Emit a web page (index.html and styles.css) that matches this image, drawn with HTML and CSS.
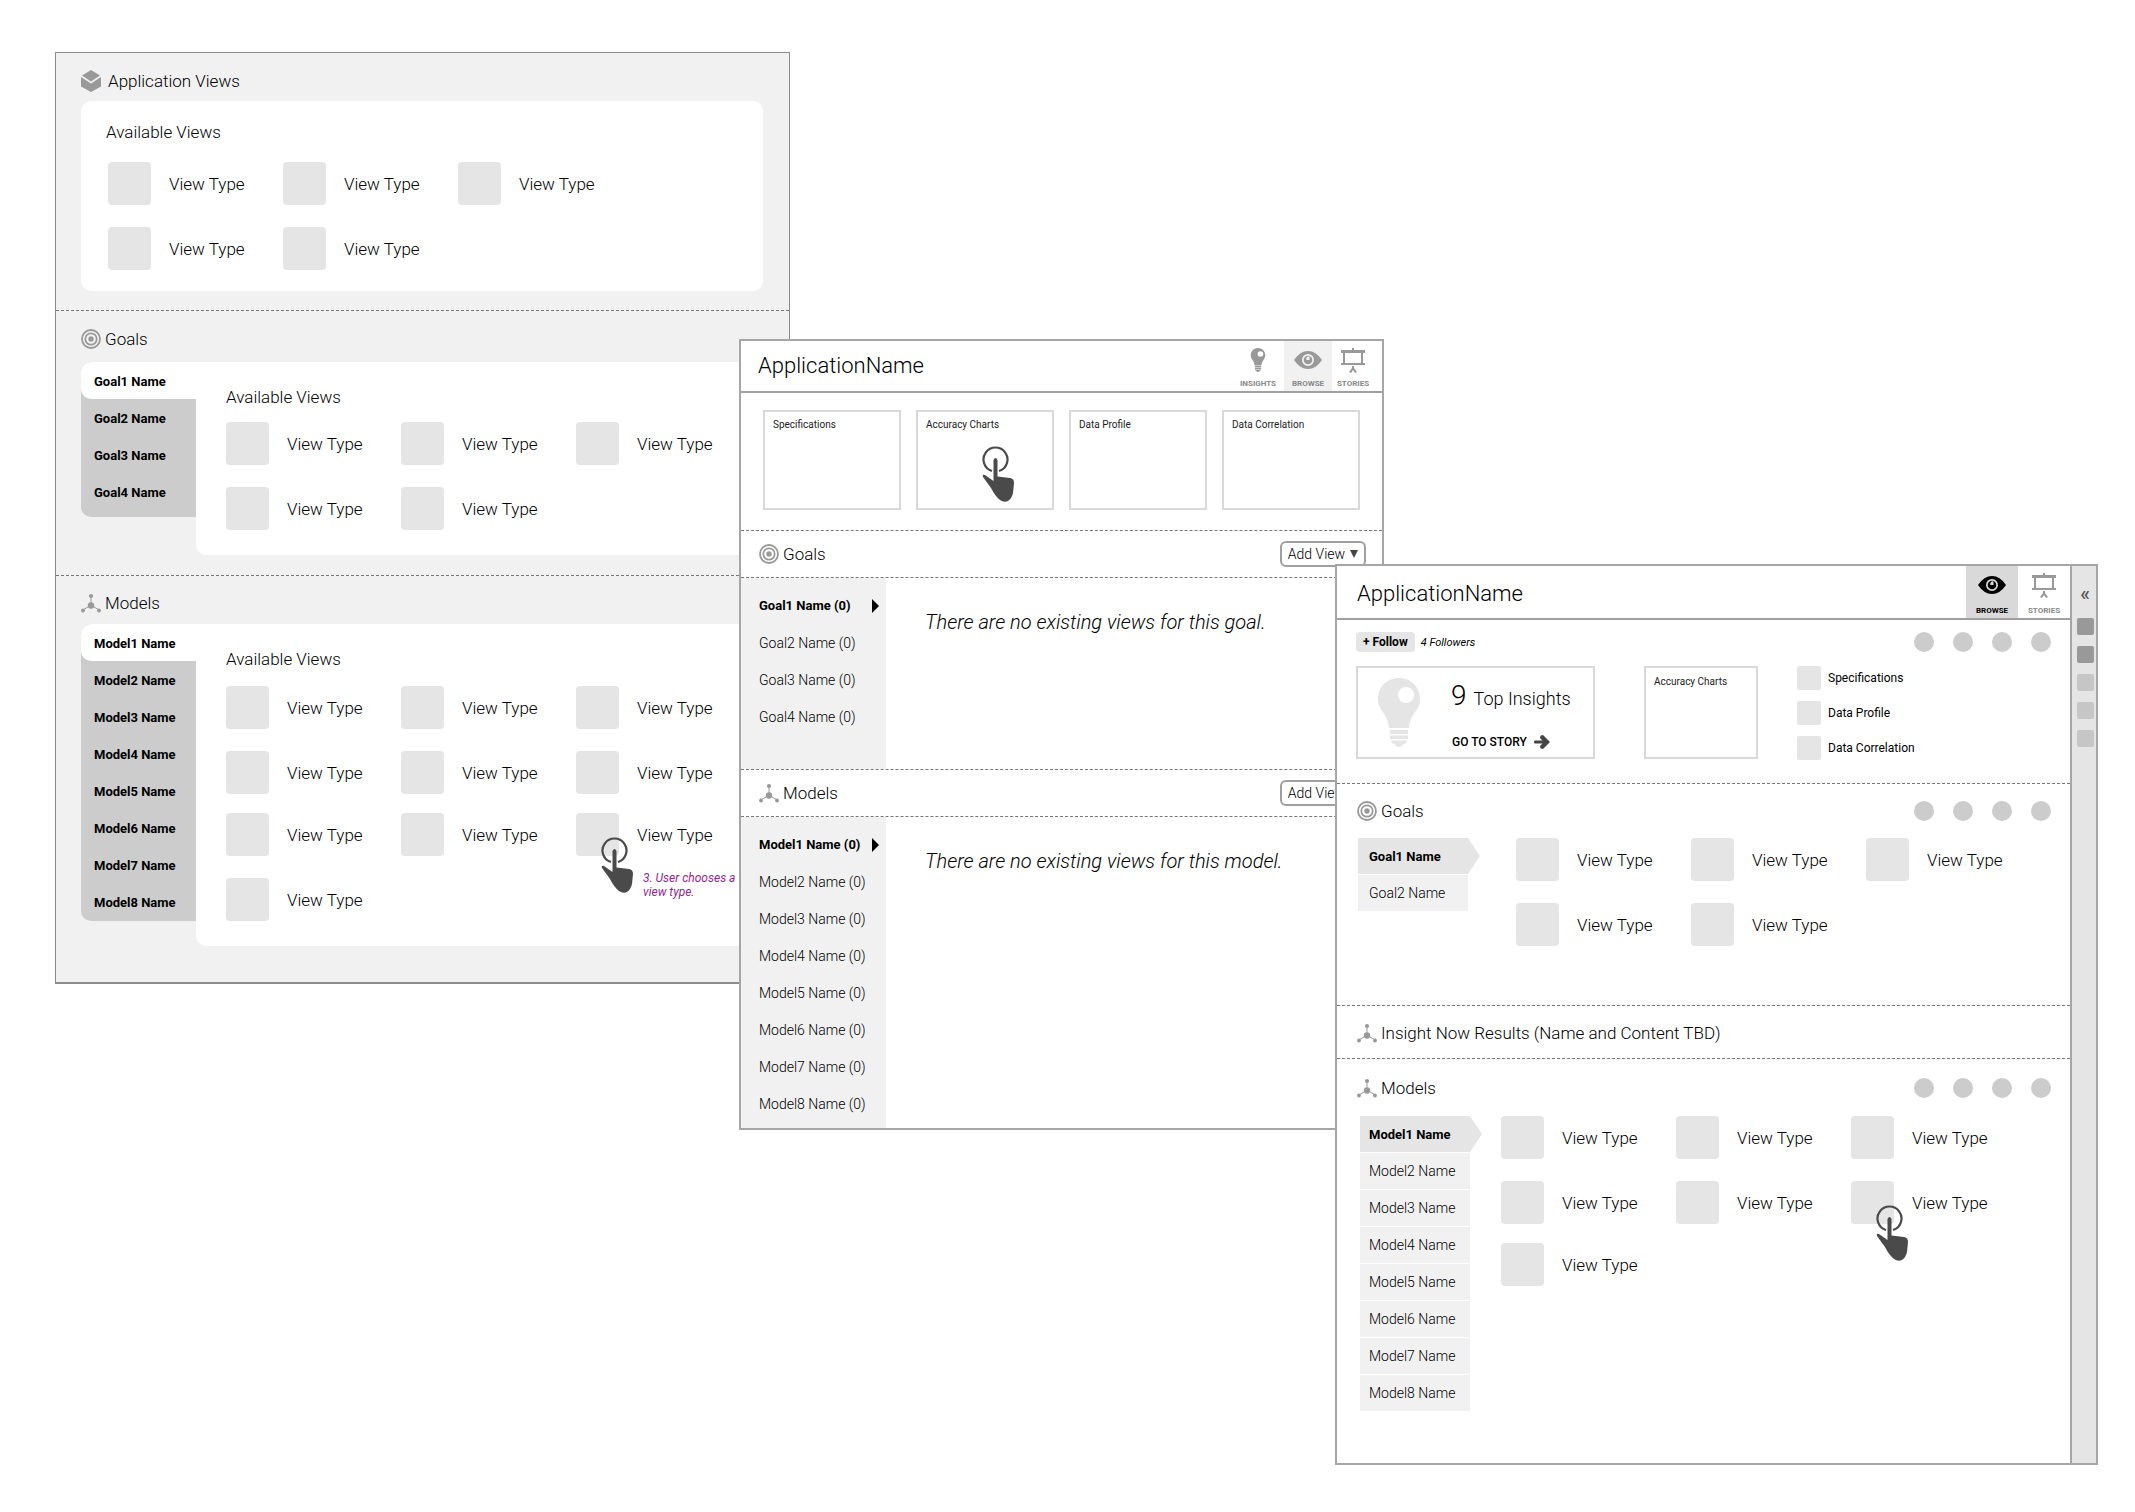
FILE: index.html
```html
<!DOCTYPE html>
<html lang="en">
<head>
<meta charset="utf-8">
<title>Application browse flow</title>
<link rel="stylesheet" href="styles.css">
</head>
<body>
<svg class="defs" aria-hidden="true">
  <symbol id="cube" viewBox="0 0 20 22">
    <path d="M10 0 19 5.500 10 11.500 1 5.500z"/>
    <path d="M0 7 10 13.500 20 7V16.500L10 22 0 16.500z"/>
  </symbol>
  <symbol id="target" viewBox="0 0 20 20">
    <circle cx="10" cy="10" r="9" fill="none" stroke="currentColor" stroke-width="1.800"/>
    <circle cx="10" cy="10" r="5.700" fill="none" stroke="currentColor" stroke-width="1.700"/>
    <circle cx="10" cy="10" r="2.700"/>
  </symbol>
  <symbol id="nodes" viewBox="0 0 20 20">
    <path d="M10 3V12L2 17M10 12 18 17" fill="none" stroke="currentColor" stroke-width="1"/>
    <circle cx="10" cy="3" r="2.100"/><circle cx="10" cy="12.500" r="3.200"/>
    <circle cx="2" cy="17.500" r="1.900"/><circle cx="18" cy="17.500" r="1.900"/>
  </symbol>
  <symbol id="bulb" viewBox="0 0 42 69">
    <path fill-rule="evenodd" d="M21 0C33 0 42 9 42 21C42 33 32 35 31 50H11C10 35 0 33 0 21C0 9 9 0 21 0zM28 9A8 8 0 1 0 28 25A8 8 0 1 0 28 9z"/>
    <path d="M12 52H30V56H12zM12 57.500H30V61H12zM13 62.500H29C29 65 27 66 25 66C25 68 23 69 21 69C19 69 17 68 17 66C15 66 13 65 13 62.500z"/>
  </symbol>
  <symbol id="eye" viewBox="0 0 28 18">
    <path fill-rule="evenodd" d="M0 9Q6 0 14 0Q22 0 28 9Q22 18 14 18Q6 18 0 9zM14 3A6 6 0 1 0 14 15A6 6 0 1 0 14 3z"/>
    <path fill-rule="evenodd" d="M14 4.700A4.300 4.300 0 1 0 14 13.300A4.300 4.300 0 1 0 14 4.700zM15.500 5.500V9H12.500A2.500 2.500 0 0 1 15.500 5.500z"/>
  </symbol>
  <symbol id="easel" viewBox="0 0 24 25">
    <path fill-rule="evenodd" d="M0 2H24V5H22V15H24V17H0V15H2V5H0zM4 5V15H20V5z"/>
    <path d="M11 0H13V2H11zM11 18H13V20L16 24L14 25L12 22L10 25L8 24L11 20z"/>
  </symbol>
  <symbol id="tap" viewBox="0 0 32 56">
    <path d="M10 25A12 12 0 1 1 17 25" fill="none" stroke="currentColor" stroke-width="2.200"/>
    <path d="M11.500 14Q13.500 10 15.500 14V30.500L28 32Q32 32.500 32 37L31 47Q30 52 26 55Q22 57 18 54Q13 50 9 42L1 31Q0 28 3 29L11.500 35z"/>
  </symbol>
  <symbol id="arrow" viewBox="0 0 16 14">
    <path d="M1 5.500H8.500L6 3Q6 0 9 0L16 7 9 14Q6 14 6 11L8.500 8.500H1Q0 8.500 0 7Q0 5.500 1 5.500z"/>
  </symbol>
</svg>

<main class="board">

  <section class="window window-views">
    <div class="group">
      <h2 class="heading heading-wide"><svg class="icon icon-cube"><use href="#cube"/></svg>Application Views</h2>
      <div class="panel">
        <h3 class="subhead">Available Views</h3>
        <ul class="tiles">
          <li>View Type</li><li>View Type</li><li>View Type</li>
          <li>View Type</li><li>View Type</li>
        </ul>
      </div>
    </div>
    <div class="group group-goals">
      <h2 class="heading"><svg class="icon"><use href="#target"/></svg>Goals</h2>
      <div class="split">
        <nav class="tabs">
          <a class="on" href="#">Goal1 Name</a><a href="#">Goal2 Name</a><a href="#">Goal3 Name</a><a href="#">Goal4 Name</a>
        </nav>
        <div class="panel panel-side">
          <h3 class="subhead">Available Views</h3>
          <ul class="tiles">
            <li>View Type</li><li>View Type</li><li>View Type</li>
            <li>View Type</li><li>View Type</li>
          </ul>
        </div>
      </div>
    </div>
    <div class="group group-models">
      <h2 class="heading"><svg class="icon"><use href="#nodes"/></svg>Models</h2>
      <div class="split">
        <nav class="tabs">
          <a class="on" href="#">Model1 Name</a><a href="#">Model2 Name</a><a href="#">Model3 Name</a><a href="#">Model4 Name</a><a href="#">Model5 Name</a><a href="#">Model6 Name</a><a href="#">Model7 Name</a><a href="#">Model8 Name</a>
        </nav>
        <div class="panel panel-side">
          <h3 class="subhead">Available Views</h3>
          <ul class="tiles">
            <li>View Type</li><li>View Type</li><li>View Type</li>
            <li>View Type</li><li>View Type</li><li>View Type</li>
            <li>View Type</li><li>View Type</li>
            <li>View Type<svg class="tap tap-tile"><use href="#tap"/></svg><span class="note">3. User chooses a view type.</span></li>
            <li>View Type</li>
          </ul>
        </div>
      </div>
    </div>
  </section>

  <section class="window window-empty">
    <header class="bar">
      <h1 class="title">ApplicationName</h1>
      <nav class="modes">
        <a href="#"><svg class="mode-bulb"><use href="#bulb"/></svg>INSIGHTS</a>
        <a class="on" href="#"><svg class="mode-eye"><use href="#eye"/></svg>BROWSE</a>
        <a href="#"><svg class="mode-easel"><use href="#easel"/></svg>STORIES</a>
      </nav>
    </header>
    <div class="boxes">
      <a class="box" href="#">Specifications</a>
      <a class="box" href="#">Accuracy Charts<svg class="tap tap-box"><use href="#tap"/></svg></a>
      <a class="box" href="#">Data Profile</a>
      <a class="box" href="#">Data Correlation</a>
    </div>
    <div class="strip">
      <h2 class="heading"><svg class="icon"><use href="#target"/></svg>Goals</h2>
      <button class="add" type="button">Add View <span class="caret"></span></button>
    </div>
    <div class="listing listing-goals">
      <nav class="side">
        <a class="on" href="#">Goal1 Name (0)</a><a href="#">Goal2 Name (0)</a><a href="#">Goal3 Name (0)</a><a href="#">Goal4 Name (0)</a>
      </nav>
      <p class="empty">There are no existing views for this goal.</p>
    </div>
    <div class="strip">
      <h2 class="heading"><svg class="icon"><use href="#nodes"/></svg>Models</h2>
      <button class="add" type="button">Add View <span class="caret"></span></button>
    </div>
    <div class="listing">
      <nav class="side">
        <a class="on" href="#">Model1 Name (0)</a><a href="#">Model2 Name (0)</a><a href="#">Model3 Name (0)</a><a href="#">Model4 Name (0)</a><a href="#">Model5 Name (0)</a><a href="#">Model6 Name (0)</a><a href="#">Model7 Name (0)</a><a href="#">Model8 Name (0)</a>
      </nav>
      <p class="empty">There are no existing views for this model.</p>
    </div>
  </section>

  <section class="window window-browse">
    <div class="content">
      <header class="bar">
        <h1 class="title">ApplicationName</h1>
        <nav class="modes">
          <a class="on" href="#"><svg class="mode-eye"><use href="#eye"/></svg>BROWSE</a>
          <a href="#"><svg class="mode-easel"><use href="#easel"/></svg>STORIES</a>
        </nav>
      </header>
      <div class="overview">
        <div class="row">
          <button class="follow" type="button">+ Follow</button>
          <span class="followers">4 Followers</span>
          <span class="dots"><i></i><i></i><i></i><i></i></span>
        </div>
        <div class="cards">
          <div class="insight">
            <svg class="big-bulb"><use href="#bulb"/></svg>
            <div>
              <p class="count"><b>9</b> Top Insights</p>
              <a class="story" href="#">GO TO STORY<svg class="arrow"><use href="#arrow"/></svg></a>
            </div>
          </div>
          <a class="box" href="#">Accuracy Charts</a>
          <ul class="links">
            <li>Specifications</li><li>Data Profile</li><li>Data Correlation</li>
          </ul>
        </div>
      </div>
      <div class="part part-goals">
        <div class="row">
          <h2 class="heading"><svg class="icon"><use href="#target"/></svg>Goals</h2>
          <span class="dots"><i></i><i></i><i></i><i></i></span>
        </div>
        <div class="picker">
          <nav class="flags">
            <a class="on" href="#">Goal1 Name</a><a href="#">Goal2 Name</a>
          </nav>
          <ul class="tiles">
            <li>View Type</li><li>View Type</li><li>View Type</li>
            <li>View Type</li><li>View Type</li>
          </ul>
        </div>
      </div>
      <div class="part part-results">
        <h2 class="heading"><svg class="icon"><use href="#nodes"/></svg>Insight Now Results (Name and Content TBD)</h2>
      </div>
      <div class="part part-models">
        <div class="row">
          <h2 class="heading"><svg class="icon"><use href="#nodes"/></svg>Models</h2>
          <span class="dots"><i></i><i></i><i></i><i></i></span>
        </div>
        <div class="picker">
          <nav class="flags">
            <a class="on" href="#">Model1 Name</a><a href="#">Model2 Name</a><a href="#">Model3 Name</a><a href="#">Model4 Name</a><a href="#">Model5 Name</a><a href="#">Model6 Name</a><a href="#">Model7 Name</a><a href="#">Model8 Name</a>
          </nav>
          <ul class="tiles">
            <li>View Type</li><li>View Type</li><li>View Type</li>
            <li>View Type</li><li>View Type</li>
            <li>View Type<svg class="tap tap-tile"><use href="#tap"/></svg></li>
            <li>View Type</li>
          </ul>
        </div>
      </div>
    </div>
    <aside class="rail">
      <button class="collapse" type="button">«</button>
      <i class="dark"></i><i class="dark"></i><i></i><i></i><i></i>
    </aside>
  </section>

</main>
</body>
</html>
```
FILE: styles.css
```css
* { box-sizing: border-box; }
body { margin: 0; background: #fff; color: #000; font-family: Roboto, "Liberation Sans", sans-serif; font-size: 16px; font-weight: 400; }
h1, h2, h3, p, ul { margin: 0; padding: 0; font-weight: 300; }
ul { list-style: none; }
a { color: inherit; text-decoration: none; }
button { font: inherit; color: inherit; margin: 0; padding: 0; border: 0; background: none; }
svg { fill: currentColor; display: block; flex: none; }
.defs { position: absolute; width: 0; height: 0; }

/* Three overlapping windows share one row; the columns mark their edges. */
.board {
  display: grid;
  grid-template-columns: minmax(0, 55fr) minmax(0, 684fr) minmax(0, 51fr) minmax(0, 545fr) minmax(0, 49fr) minmax(0, 714fr) minmax(0, 37fr);
  align-items: start;
  padding-bottom: 47px;
}
.window { grid-row: 1; border: 2px solid #a6a6a6; background: #fff; }
.window-views { grid-column: 2 / 4; margin-top: 52px; background: #f1f1f1; border-width: 1px 1px 2px; border-color: #8c8c8c; }
.window-empty { grid-column: 3 / 6; margin-top: 339px; }
.window-browse { grid-column: 5 / 7; margin-top: 564px; display: flex; }

/* Shared pieces */
.heading { display: flex; align-items: center; gap: 4px; font-size: 17px; line-height: 24px; font-weight: 300; }
.heading-wide { gap: 7px; }
.icon { width: 20px; height: 20px; color: #999; }
.icon-cube { height: 22px; }
.subhead { font-size: 17px; line-height: 24px; }
.tiles { display: grid; grid-template-columns: repeat(auto-fill, 175px); grid-auto-rows: 65px; }
.tiles li { position: relative; display: flex; align-items: center; gap: 18px; height: 43px; font-size: 17px; font-weight: 300; white-space: nowrap; }
.tiles li::before { content: ""; width: 43px; height: 43px; border-radius: 4px; background: #e5e5e5; }
.tap { position: absolute; width: 32px; height: 56px; color: #4a4a4a; }
.tap-tile { left: 25px; top: 24px; }
.tap-box { left: 64px; top: 34px; }

/* Available views */
.group { padding: 16px 26px 19px 25px; }
.group + .group { border-top: 1px dashed #777; }
.group .heading { margin-bottom: 8px; }
.panel { padding: 19px 25px 0; height: 190px; border-radius: 10px; background: #fff; }
.panel .tiles { margin: 18px 0 0 2px; }
.group-goals { padding-bottom: 20px; }
.group-goals .heading { margin-bottom: 11px; }
.split { display: flex; align-items: flex-start; }
.tabs { flex: none; width: 115px; padding-bottom: 7px; border-radius: 10px 0 0 10px; background: #ccc; }
.tabs a { display: flex; align-items: center; height: 37px; padding-left: 13px; padding-top: 1px; font-size: 13px; font-weight: 700; }
.tabs .on { border-radius: 10px 0 0 10px; background: #fff; }
.panel-side { flex: 1; min-width: 0; padding: 23px 0 0 30px; height: 193px; border-radius: 0 10px 10px 10px; }
.panel-side .tiles { margin: 13px 0 0 0; }
.group-models { padding-top: 15px; padding-bottom: 36px; }
.group-models .heading { margin-bottom: 9px; }
.group-models .tabs { padding-bottom: 1px; }
.group-models .panel { height: 322px; }
.group-models .tiles { margin-top: 15px; grid-template-rows: 65px 62px 65px 43px; }
.note { position: absolute; left: 67px; top: 58px; width: 104px; white-space: normal; color: #93278f; font-size: 12px; line-height: 14px; font-weight: 400; font-style: italic; }

/* Title bar */
.bar { display: flex; justify-content: space-between; height: 52px; border-bottom: 2px solid #a0a0a0; }
.title { padding-left: 17px; font-size: 22px; line-height: 50px; }
.modes { display: flex; padding-right: 8px; }
.modes a { display: flex; flex-direction: column; align-items: center; justify-content: space-between; width: 52px; padding: 7px 0 3px; color: #888; font-size: 8px; line-height: 9px; font-weight: 700; }
.modes svg { color: #999; }
.modes .on { background: #f1f1f1; }
.mode-bulb { width: 16px; height: 24px; }
.mode-eye { width: 28px; height: 18px; margin-top: 3px; }
.mode-easel { width: 24px; height: 25px; }
.window-empty .modes .on { width: 48px; }
.window-empty .modes a:last-child { width: 42px; }

/* Empty application */
.boxes { display: grid; grid-template-columns: repeat(4, 1fr); gap: 15px; padding: 17px 22px 20px; }
.box { position: relative; display: block; height: 100px; padding: 7px 8px; border: 2px solid #d9d9d9; font-size: 10px; line-height: 12px; color: #222; }
.strip { display: flex; align-items: center; justify-content: space-between; height: 48px; padding: 0 16px 0 18px; border: dashed #777; border-width: 1px 0; }
.add { display: flex; align-items: center; justify-content: center; gap: 5px; width: 86px; height: 26px; border: 2px solid #a0a0a0; border-radius: 6px; background: #fff; font-size: 14px; font-weight: 300; }
.caret { border: 4px solid transparent; border-top: 8px solid #444; border-bottom: 0; }
.listing { display: flex; }
.side { flex: none; width: 145px; padding: 9px 0 6px; background: #f1f1f1; }
.side a { display: flex; align-items: center; justify-content: space-between; height: 37px; padding: 0 7px 0 18px; font-size: 14px; font-weight: 300; }
.side .on { font-size: 13px; font-weight: 700; }
.side .on::after { content: ""; border: 7px solid transparent; border-left: 7px solid #000; border-right: 0; }
.listing-goals .side { padding-bottom: 34px; }
.empty { padding: 30px 0 0 39px; font-size: 20px; line-height: 28px; font-style: italic; }

/* Browse window */
.content { flex: 1; min-width: 0; padding-bottom: 52px; }
.window-browse .modes { padding: 0; }
.window-browse .modes .on, .window-browse .modes .on svg { background: #d9d9d9; color: #000; }
.window-browse .title { padding-left: 20px; line-height: 56px; }
.window-browse .bar { height: 54px; }
.row { display: flex; align-items: center; height: 24px; }
.dots { display: flex; gap: 19px; margin-left: auto; }
.dots i { width: 20px; height: 20px; border-radius: 50%; background: #ccc; }
.overview { padding: 10px 19px 24px; }
.follow { height: 20px; padding: 0 7px; border-radius: 4px; background: #e5e5e5; font-size: 12px; font-weight: 700; }
.followers { margin-left: 6px; font-size: 11px; font-style: italic; }
.cards { display: flex; margin-top: 12px; height: 93px; }
.insight { display: flex; flex: none; width: 239px; padding: 10px 20px; border: 2px solid #d9d9d9; gap: 31px; }
.big-bulb { width: 42px; height: 69px; color: #e5e5e5; }
.count { font-size: 18px; line-height: 36px; white-space: nowrap; }
.count b { margin-right: 3px; font-size: 28px; font-weight: 300; }
.story { display: flex; align-items: center; gap: 7px; margin-top: 18px; padding-left: 1px; font-size: 12px; line-height: 14px; font-weight: 500; white-space: nowrap; }
.arrow { width: 16px; height: 14px; color: #444; }
.cards .box { width: 114px; height: 93px; margin-left: 49px; padding-top: 8px; }
.links { display: flex; flex-direction: column; gap: 11px; margin-left: 39px; }
.links li { display: flex; align-items: center; gap: 7px; height: 24px; font-size: 12px; font-weight: 400; }
.links li::before { content: ""; width: 24px; height: 24px; border-radius: 2px; background: #e5e5e5; }
.part { padding: 15px 19px 0 20px; border-top: 1px dashed #777; }
.part-goals { height: 222px; }
.part-results { height: 53px; }
.picker { display: flex; margin-top: 15px; }
.flags { display: flex; flex-direction: column; gap: 1px; flex: none; width: 110px; margin-left: 1px; }
.flags a { display: flex; align-items: center; height: 36px; padding-left: 11px; background: #f1f1f1; font-size: 14px; font-weight: 300; }
.flags .on { width: 122px; background: #e5e5e5; font-size: 13px; font-weight: 700; clip-path: polygon(0 0, 110px 0, 100% 50%, 110px 100%, 0 100%); }
.picker .tiles { flex: 1; margin-left: 48px; }
.part-models { padding-top: 17px; }
.part-models .picker { margin-top: 16px; }
.part-models .flags { margin-left: 3px; }
.part-models .flags a { padding-left: 9px; }
.part-models .tiles { margin-left: 31px; grid-template-rows: 65px 62px 43px; }
.rail { flex: none; display: flex; flex-direction: column; align-items: center; gap: 11px; width: 26px; padding-left: 2px; border-left: 2px solid #a6a6a6; background: #e5e5e5; }
.collapse { height: 41px; padding-top: 13px; font-size: 20px; line-height: 26px; font-weight: 500; color: #555; }
.rail i { width: 17px; height: 17px; border-radius: 2px; background: #c6c6c6; }
.rail .dark { background: #999; }
```
